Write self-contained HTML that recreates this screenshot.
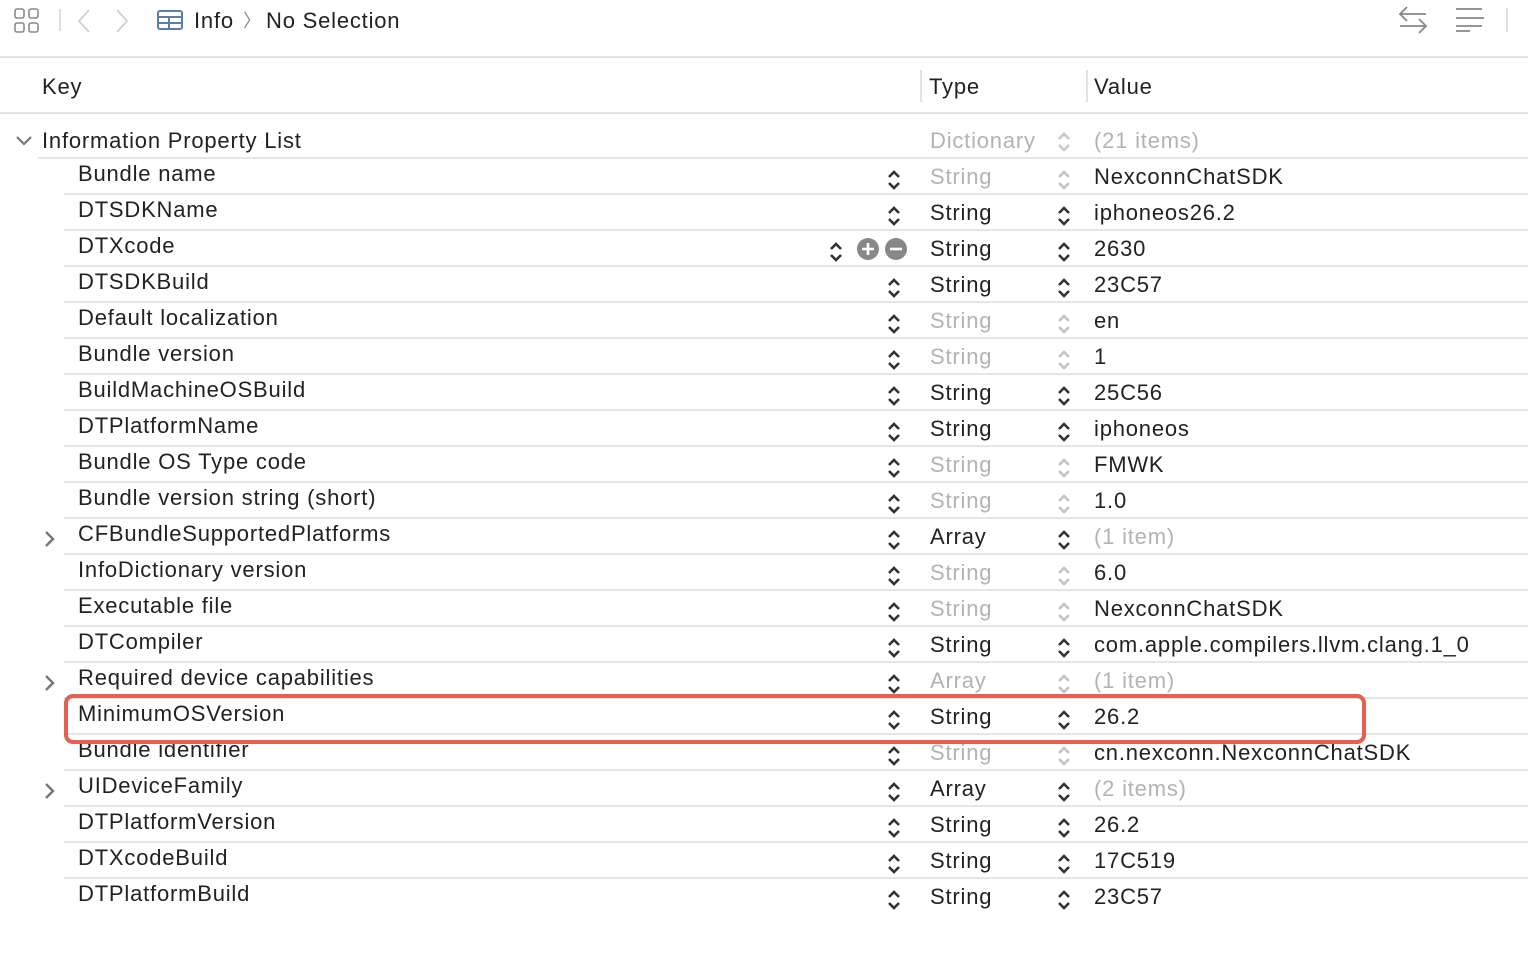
<!DOCTYPE html>
<html><head><meta charset="utf-8"><style>
*{margin:0;padding:0;box-sizing:border-box}
body{width:1528px;height:968px;background:#fff;position:relative;overflow:hidden;font-family:"Liberation Sans",sans-serif;color:#222;font-size:22px;letter-spacing:0.8px}
.a{position:absolute}
.row{position:absolute;left:0;width:1528px;height:36px}
.row .ln{position:absolute;left:64px;right:0;bottom:-1px;height:2px;background:#e6e6e6}
.k{position:absolute;left:78px;top:4px;line-height:24px;white-space:nowrap}
.t{position:absolute;left:930px;top:7px;line-height:24px}
.v{position:absolute;left:1094px;top:7px;line-height:24px;white-space:nowrap}
.g{color:#b3b3b3}
.s1{position:absolute;left:886px;top:10px}
.s2{position:absolute;left:1056px;top:10px}
.ch{position:absolute;left:44px;top:12px}
</style></head><body>
<svg class="a" style="left:14px;top:8px" width="26" height="26" viewBox="0 0 26 26" fill="none" stroke="#8a8a8a" stroke-width="1.6"><rect x="1" y="1" width="9" height="9" rx="2"/><rect x="15" y="1" width="9" height="9" rx="2"/><rect x="1" y="15" width="9" height="9" rx="2"/><rect x="15" y="15" width="9" height="9" rx="2"/></svg>
<div class="a" style="left:59px;top:9px;width:2px;height:22px;background:#e0e0e0"></div>
<svg class="a" style="left:76px;top:8px" width="16" height="26" viewBox="0 0 16 26" fill="none" stroke="#d0d0d0" stroke-width="1.8"><path d="M13 2 L3 13 L13 24"/></svg>
<svg class="a" style="left:114px;top:8px" width="16" height="26" viewBox="0 0 16 26" fill="none" stroke="#d0d0d0" stroke-width="1.8"><path d="M3 2 L13 13 L3 24"/></svg>
<svg class="a" style="left:157px;top:10px" width="26" height="20" viewBox="0 0 26 20" fill="none" stroke="#5b7fa6" stroke-width="2"><rect x="1" y="1" width="24" height="18" rx="2"/><path d="M1 7 H25 M1 13 H25 M12 7 V19"/></svg>
<div class="a" style="left:194px;top:8px;line-height:26px">Info</div>
<div class="a" style="left:243px;top:8px;line-height:26px;color:#888;font-size:18px">〉</div>
<div class="a" style="left:266px;top:8px;line-height:26px">No Selection</div>
<svg class="a" style="left:1398px;top:4px" width="30" height="30" viewBox="0 0 30 30" fill="none" stroke="#888" stroke-width="1.8"><path d="M28 10 H2 M9 3 L2 10 L9 17 M2 22 H28 M21 15 L28 22 L21 29"/></svg>
<svg class="a" style="left:1455px;top:6px" width="30" height="26" viewBox="0 0 30 26" fill="none" stroke="#888" stroke-width="1.8"><path d="M1 3 H27 M1 12 H29 M1 20 H27 M1 25 H15"/></svg>
<div class="a" style="left:1506px;top:8px;width:2px;height:24px;background:#e0e0e0"></div>
<div class="a" style="left:0;top:56px;width:1528px;height:2px;background:#e3e3e3"></div>
<div class="a" style="left:42px;top:75px;line-height:24px">Key</div>
<div class="a" style="left:920px;top:70px;width:2px;height:32px;background:#e3e3e3"></div>
<div class="a" style="left:929px;top:75px;line-height:24px">Type</div>
<div class="a" style="left:1086px;top:70px;width:2px;height:32px;background:#e3e3e3"></div>
<div class="a" style="left:1094px;top:75px;line-height:24px">Value</div>
<div class="a" style="left:0;top:112px;width:1528px;height:2px;background:#e3e3e3"></div>
<svg class="a" style="left:15px;top:135px" width="18" height="12" viewBox="0 0 18 12" fill="none" stroke="#777" stroke-width="2.2"><path d="M2 2 L9 9 L16 2"/></svg>
<div class="a" style="left:42px;top:129px;line-height:24px">Information Property List</div>
<div class="a g" style="left:930px;top:129px;line-height:24px">Dictionary</div>
<svg class="a" style="left:1056px;top:130px" width="16" height="24" viewBox="0 0 16 24" fill="none" stroke="#c8c8c8" stroke-width="2.6"><path d="M3 9 L8 4 L13 9 M3 15 L8 20 L13 15"/></svg>
<div class="a g" style="left:1094px;top:129px;line-height:24px">(21 items)</div>
<div class="a" style="left:38px;top:157px;width:1490px;height:2px;background:#e6e6e6"></div>

<svg width="0" height="0" style="position:absolute"><defs>
<symbol id="sd" viewBox="0 0 16 24"><path d="M3 9 L8 4 L13 9 M3 15 L8 20 L13 15" fill="none" stroke="#333" stroke-width="2.6"/></symbol>
<symbol id="sl" viewBox="0 0 16 24"><path d="M3 9 L8 4 L13 9 M3 15 L8 20 L13 15" fill="none" stroke="#c4c4c4" stroke-width="2.6"/></symbol>
<symbol id="cr" viewBox="0 0 12 18"><path d="M2 2 L9 9 L2 16" fill="none" stroke="#777" stroke-width="2.4"/></symbol>
</defs></svg>

<div class="row" style="top:158px"><div class="k">Bundle name</div><svg class="s1" width="16" height="24"><use href="#sd"/></svg><div class="t g">String</div><svg class="s2" width="16" height="24"><use href="#sl"/></svg><div class="v">NexconnChatSDK</div><div class="ln"></div></div>
<div class="row" style="top:194px"><div class="k">DTSDKName</div><svg class="s1" width="16" height="24"><use href="#sd"/></svg><div class="t">String</div><svg class="s2" width="16" height="24"><use href="#sd"/></svg><div class="v">iphoneos26.2</div><div class="ln"></div></div>
<div class="row" style="top:230px"><div class="k">DTXcode</div>
<svg class="a" style="left:828px;top:10px" width="16" height="24"><use href="#sd"/></svg>
<svg class="a" style="left:857px;top:8px" width="22" height="22" viewBox="0 0 22 22"><circle cx="11" cy="11" r="11" fill="#888"/><path d="M11 5 V17 M5 11 H17" stroke="#fff" stroke-width="2.6"/></svg>
<svg class="a" style="left:885px;top:8px" width="22" height="22" viewBox="0 0 22 22"><circle cx="11" cy="11" r="11" fill="#888"/><path d="M5 11 H17" stroke="#fff" stroke-width="2.6"/></svg>
<div class="t">String</div><svg class="s2" width="16" height="24"><use href="#sd"/></svg><div class="v">2630</div><div class="ln"></div></div>
<div class="row" style="top:266px"><div class="k">DTSDKBuild</div><svg class="s1" width="16" height="24"><use href="#sd"/></svg><div class="t">String</div><svg class="s2" width="16" height="24"><use href="#sd"/></svg><div class="v">23C57</div><div class="ln"></div></div>
<div class="row" style="top:302px"><div class="k">Default localization</div><svg class="s1" width="16" height="24"><use href="#sd"/></svg><div class="t g">String</div><svg class="s2" width="16" height="24"><use href="#sl"/></svg><div class="v">en</div><div class="ln"></div></div>
<div class="row" style="top:338px"><div class="k">Bundle version</div><svg class="s1" width="16" height="24"><use href="#sd"/></svg><div class="t g">String</div><svg class="s2" width="16" height="24"><use href="#sl"/></svg><div class="v">1</div><div class="ln"></div></div>
<div class="row" style="top:374px"><div class="k">BuildMachineOSBuild</div><svg class="s1" width="16" height="24"><use href="#sd"/></svg><div class="t">String</div><svg class="s2" width="16" height="24"><use href="#sd"/></svg><div class="v">25C56</div><div class="ln"></div></div>
<div class="row" style="top:410px"><div class="k">DTPlatformName</div><svg class="s1" width="16" height="24"><use href="#sd"/></svg><div class="t">String</div><svg class="s2" width="16" height="24"><use href="#sd"/></svg><div class="v">iphoneos</div><div class="ln"></div></div>
<div class="row" style="top:446px"><div class="k">Bundle OS Type code</div><svg class="s1" width="16" height="24"><use href="#sd"/></svg><div class="t g">String</div><svg class="s2" width="16" height="24"><use href="#sl"/></svg><div class="v">FMWK</div><div class="ln"></div></div>
<div class="row" style="top:482px"><div class="k">Bundle version string (short)</div><svg class="s1" width="16" height="24"><use href="#sd"/></svg><div class="t g">String</div><svg class="s2" width="16" height="24"><use href="#sl"/></svg><div class="v">1.0</div><div class="ln"></div></div>
<div class="row" style="top:518px"><svg class="ch" width="12" height="18"><use href="#cr"/></svg><div class="k">CFBundleSupportedPlatforms</div><svg class="s1" width="16" height="24"><use href="#sd"/></svg><div class="t">Array</div><svg class="s2" width="16" height="24"><use href="#sd"/></svg><div class="v g">(1 item)</div><div class="ln"></div></div>
<div class="row" style="top:554px"><div class="k">InfoDictionary version</div><svg class="s1" width="16" height="24"><use href="#sd"/></svg><div class="t g">String</div><svg class="s2" width="16" height="24"><use href="#sl"/></svg><div class="v">6.0</div><div class="ln"></div></div>
<div class="row" style="top:590px"><div class="k">Executable file</div><svg class="s1" width="16" height="24"><use href="#sd"/></svg><div class="t g">String</div><svg class="s2" width="16" height="24"><use href="#sl"/></svg><div class="v">NexconnChatSDK</div><div class="ln"></div></div>
<div class="row" style="top:626px"><div class="k">DTCompiler</div><svg class="s1" width="16" height="24"><use href="#sd"/></svg><div class="t">String</div><svg class="s2" width="16" height="24"><use href="#sd"/></svg><div class="v">com.apple.compilers.llvm.clang.1_0</div><div class="ln"></div></div>
<div class="row" style="top:662px"><svg class="ch" width="12" height="18"><use href="#cr"/></svg><div class="k">Required device capabilities</div><svg class="s1" width="16" height="24"><use href="#sd"/></svg><div class="t g">Array</div><svg class="s2" width="16" height="24"><use href="#sl"/></svg><div class="v g">(1 item)</div><div class="ln"></div></div>
<div class="row" style="top:698px"><div class="k">MinimumOSVersion</div><svg class="s1" width="16" height="24"><use href="#sd"/></svg><div class="t">String</div><svg class="s2" width="16" height="24"><use href="#sd"/></svg><div class="v">26.2</div><div class="ln"></div></div>
<div class="row" style="top:734px"><div class="k">Bundle identifier</div><svg class="s1" width="16" height="24"><use href="#sd"/></svg><div class="t g">String</div><svg class="s2" width="16" height="24"><use href="#sl"/></svg><div class="v">cn.nexconn.NexconnChatSDK</div><div class="ln"></div></div>
<div class="row" style="top:770px"><svg class="ch" width="12" height="18"><use href="#cr"/></svg><div class="k">UIDeviceFamily</div><svg class="s1" width="16" height="24"><use href="#sd"/></svg><div class="t">Array</div><svg class="s2" width="16" height="24"><use href="#sd"/></svg><div class="v g">(2 items)</div><div class="ln"></div></div>
<div class="row" style="top:806px"><div class="k">DTPlatformVersion</div><svg class="s1" width="16" height="24"><use href="#sd"/></svg><div class="t">String</div><svg class="s2" width="16" height="24"><use href="#sd"/></svg><div class="v">26.2</div><div class="ln"></div></div>
<div class="row" style="top:842px"><div class="k">DTXcodeBuild</div><svg class="s1" width="16" height="24"><use href="#sd"/></svg><div class="t">String</div><svg class="s2" width="16" height="24"><use href="#sd"/></svg><div class="v">17C519</div><div class="ln"></div></div>
<div class="row" style="top:878px"><div class="k">DTPlatformBuild</div><svg class="s1" width="16" height="24"><use href="#sd"/></svg><div class="t">String</div><svg class="s2" width="16" height="24"><use href="#sd"/></svg><div class="v">23C57</div></div>

<div class="a" style="left:64px;top:694px;width:1302px;height:50px;border:4.5px solid #e5604f;border-radius:9px"></div>
</body></html>
